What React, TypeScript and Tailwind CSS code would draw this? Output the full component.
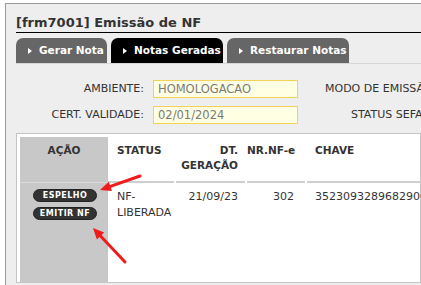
import React from 'react'

const tabs = [
  { label: 'Gerar Nota', active: false, w: 'w-[91px]' },
  { label: 'Notas Geradas', active: true, w: 'w-[112px]' },
  { label: 'Restaurar Notas', active: false, w: 'w-[122px]' },
]

function Arrow({ x1, y1, x2, y2 }: { x1: number; y1: number; x2: number; y2: number }) {
  // linha com ponta no (x2, y2)
  const a = Math.atan2(y2 - y1, x2 - x1)
  const L = 11
  const W = 5
  const bx = x2 - L * Math.cos(a)
  const by = y2 - L * Math.sin(a)
  const p1 = `${bx + W * Math.sin(a)},${by - W * Math.cos(a)}`
  const p2 = `${bx - W * Math.sin(a)},${by + W * Math.cos(a)}`
  return (
    <g>
      <line x1={x1} y1={y1} x2={bx} y2={by} stroke="#ee1c1c" strokeWidth="3" strokeLinecap="round" />
      <polygon points={`${x2},${y2} ${p1} ${p2}`} fill="#ee1c1c" />
    </g>
  )
}

export default function App() {
  return (
    <div
      className="relative w-[421px] h-[285px] overflow-hidden bg-white text-[#333]"
      style={{ fontFamily: '"DejaVu Sans", Verdana, sans-serif' }}
    >
      <div className="ml-[5px] mt-[3px] h-[300px] border-l border-t border-[#9a9a9a] bg-[#eeeeee] pl-[10px] pt-[10px]">
        {/* título */}
        <div className="border-b border-black pb-[1px] text-[13px] font-bold leading-[17px] text-[#333] whitespace-nowrap">
          [frm7001] Emissão de NF
        </div>

        {/* abas */}
        <div className="mt-[5px] flex gap-[4px] border-b border-[#d6d6d6]">
          {tabs.map((t) => (
            <div
              key={t.label}
              className={`${t.w} h-[25px] shrink-0 rounded-t-[7px] flex items-center pl-[12px] gap-[7px] text-[10.5px] font-bold text-white whitespace-nowrap ${
                t.active ? 'bg-black' : 'bg-[#666666]'
              }`}
            >
              <svg width="4" height="6" viewBox="0 0 4 6">
                <polygon points="0,0 4,3 0,6" fill="#fff" />
              </svg>
              {t.label}
            </div>
          ))}
        </div>

        {/* campos */}
        <div className="mt-[16px] flex text-[11px] whitespace-nowrap">
          <div className="w-[128px] shrink-0 flex flex-col items-end gap-[8px]">
            <div className="h-[18px] leading-[18px]">AMBIENTE:</div>
            <div className="h-[18px] leading-[18px]">CERT. VALIDADE:</div>
          </div>
          <div className="ml-[9px] w-[145px] shrink-0 flex flex-col gap-[8px]">
            <div className="h-[18px] border border-[#f2d35a] bg-[#ffffe3] px-[4px] leading-[16px] text-[#7a7a7a] text-[11.5px]">
              HOMOLOGACAO
            </div>
            <div className="h-[18px] border border-[#f2d35a] bg-[#ffffe3] px-[4px] leading-[16px] text-[#7a7a7a] text-[11.5px]">
              02/01/2024
            </div>
          </div>
          <div className="ml-[27px] flex flex-col gap-[8px] shrink-0">
            <div className="h-[18px] leading-[18px]">MODO DE EMISSÃO:</div>
            <div className="h-[18px] leading-[18px] pl-[26px]">STATUS SEFAZ:</div>
          </div>
        </div>

        {/* tabela */}
        <div className="mt-[9px] h-[150px] border border-[#c4c4c4] bg-white p-[3px]">
          <div className="flex h-[145px] text-[11px]">
            <div className="w-[88px] shrink-0 bg-[#c8c8c8] flex flex-col">
              <div className="h-[46px] border-b border-[#dadada] pt-[6px] text-center font-bold text-[10.5px] leading-[14px]">AÇÃO</div>
              <div className="flex flex-col items-center pt-[6px] gap-[5px] pl-[2px]">
                <div className="w-[64px] h-[13px] rounded-full bg-[#333] border border-[#222] text-white text-[8px] font-bold leading-[11px] text-center tracking-[0.5px]">
                  ESPELHO
                </div>
                <div className="w-[64px] h-[13px] rounded-full bg-[#333] border border-[#222] text-white text-[8px] font-bold leading-[11px] text-center tracking-[0.5px]">
                  EMITIR NF
                </div>
              </div>
            </div>
            <div className="flex gap-[2px] whitespace-nowrap">
              <div className="w-[66px] shrink-0">
                <div className="h-[46px] border-b-2 border-[#cfcfcf] pt-[6px] pl-[9px] font-bold text-[10.5px] leading-[14px]">STATUS</div>
                <div className="pt-[6px] pl-[9px] leading-[16px]">
                  NF-
                  <br />
                  LIBERADA
                </div>
              </div>
              <div className="w-[69px] shrink-0 text-right">
                <div className="h-[46px] border-b-2 border-[#cfcfcf] pt-[6px] pr-[7px] font-bold text-[10.5px] leading-[15px]">
                  DT.
                  <br />
                  GERAÇÃO
                </div>
                <div className="pt-[6px] pr-[7px] leading-[16px]">21/09/23</div>
              </div>
              <div className="w-[58px] shrink-0 text-right">
                <div className="h-[46px] border-b-2 border-[#cfcfcf] pt-[6px] pr-[10px] font-bold text-[10.5px] leading-[14px]">NR.NF-e</div>
                <div className="pt-[6px] pr-[11px] leading-[16px]">302</div>
              </div>
              <div className="w-[140px] shrink-0">
                <div className="h-[46px] border-b-2 border-[#cfcfcf] pt-[6px] pl-[8px] font-bold text-[10.5px] leading-[14px]">CHAVE</div>
                <div className="pt-[6px] pl-[8px] leading-[16px]">35230932896829000172</div>
              </div>
            </div>
          </div>
        </div>
      </div>

      {/* setas */}
      <svg className="absolute inset-0 pointer-events-none" width="421" height="285">
        <Arrow x1={140} y1={176} x2={100} y2={190} />
        <Arrow x1={125} y1={262} x2={93} y2={228} />
      </svg>
    </div>
  )
}
